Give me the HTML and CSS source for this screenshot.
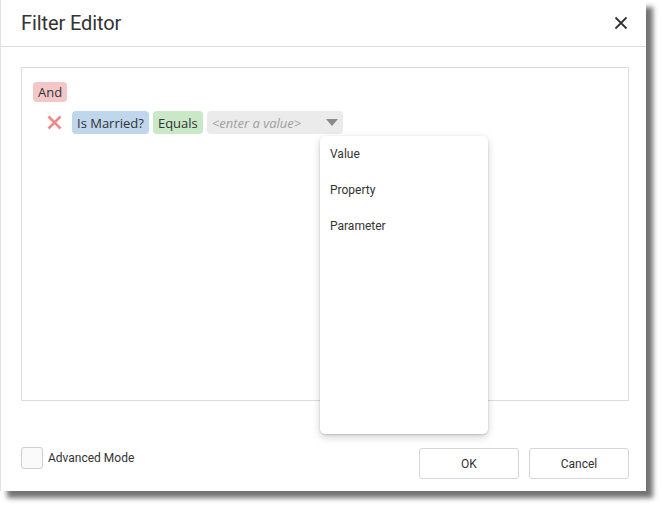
FILE: index.html
```html
<!DOCTYPE html>
<html>
<head>
<meta charset="utf-8">
<link rel="stylesheet" href="styles.css">
</head>
<body>
<div class="dialog">
  <div class="header">
    <span class="title">Filter Editor</span>
    <span class="close">
      <svg width="14" height="14" viewBox="0 0 14 14"><path d="M1.5 1.5 L12.5 12.5 M12.5 1.5 L1.5 12.5" stroke="#333" stroke-width="1.8" fill="none"/></svg>
    </span>
  </div>
  <div class="body">
    <div class="filter">
      <div class="row"><span class="chip and">And</span></div>
      <div class="row cond">
        <span class="remove">
          <svg width="15" height="15" viewBox="0 0 15 15"><path d="M1.5 1.5 L13.5 13.5 M13.5 1.5 L1.5 13.5" stroke="#ea8a8a" stroke-width="2.6" fill="none"/></svg>
        </span>
        <span class="chip field">Is Married?</span>
        <span class="chip op">Equals</span>
        <span class="chip value"><span class="ph">&lt;enter a value&gt;</span><span class="caret"></span></span>
      </div>
    </div>
  </div>
  <div class="footer">
    <label class="adv"><span class="box"></span><span>Advanced Mode</span></label>
    <div class="buttons">
      <button class="btn">OK</button>
      <button class="btn">Cancel</button>
    </div>
  </div>
  <div class="popup">
    <div class="item">Value</div>
    <div class="item">Property</div>
    <div class="item">Parameter</div>
  </div>
</div>
</body>
</html>
```

FILE: styles.css
```css
html, body { margin: 0; padding: 0; background: #fff; }
body { font-family: Roboto, "Liberation Sans", Arial, sans-serif; color: #333; padding-bottom: 16px; }

.dialog {
  position: relative;
  width: 645px;
  height: 491px;
  background: #fff;
  border-left: 1px solid #e2e2e2;
  box-shadow: 7px 7px 5px rgba(0,0,0,0.55);
  display: flex;
  flex-direction: column;
}

.header {
  height: 47px;
  border-bottom: 1px solid #dcdcdc;
  display: flex;
  align-items: center;
  justify-content: space-between;
  padding: 0 18px 0 20px;
  box-sizing: border-box;
}
.title { font-size: 20px; color: #333; letter-spacing: -0.1px; }
.close { display: flex; }

.body { padding: 20px 17px 0 20px; }
.filter {
  height: 334px;
  box-sizing: border-box;
  border: 1px solid #dcdcdc;
  padding: 14px 11px;
  font-family: "Open Sans", "Noto Sans", sans-serif;
  font-size: 13px;
}
.row { display: flex; align-items: center; }
.cond { margin-top: 9px; padding-left: 14px; gap: 4px; }
.remove { display: flex; width: 15px; margin-right: 6px; }
.chip {
  display: inline-flex;
  align-items: center;
  height: 22px;
  padding: 0 5px;
  border-radius: 4px;
  color: #333;
  line-height: 22px;
}
.cond .chip { height: 23px; }
.and { background: #f3c7c7; height: 20px; }
.field { background: #bfd6ed; }
.op { background: #c8e8c8; }
.value {
  background: #ebebeb;
  width: 136px;
  box-sizing: border-box;
  justify-content: space-between;
  padding-right: 5px;
}
.ph { color: #a0a0a0; font-style: italic; }
.caret {
  width: 0; height: 0;
  border-left: 6px solid transparent;
  border-right: 6px solid transparent;
  border-top: 7px solid #8a8a8a;
}

.footer {
  margin-top: auto;
  padding: 0 17px 12px 20px;
  display: flex;
  justify-content: space-between;
  align-items: flex-end;
}
.adv {
  display: flex;
  align-items: center;
  gap: 5px;
  font-size: 12px;
  color: #333;
  margin-bottom: 10px;
}
.box {
  width: 20px; height: 20px;
  border: 1px solid #cfcfcf;
  border-radius: 3px;
  background: #fafafa;
}
.buttons { display: flex; gap: 10px; }
.btn {
  width: 100px;
  height: 31px;
  border: 1px solid #d6d6d6;
  border-radius: 3px;
  background: #fff;
  font-family: Roboto, "Liberation Sans", sans-serif;
  font-size: 12px;
  color: #333;
  padding: 0;
}

.popup {
  position: absolute;
  left: 319px;
  top: 136px;
  width: 168px;
  height: 298px;
  background: #fff;
  border-radius: 5px;
  box-shadow: 0 1px 2px rgba(0,0,0,0.15), 0 3px 8px rgba(0,0,0,0.18);
  padding-top: 8px;
  box-sizing: border-box;
}
.item {
  height: 36px;
  line-height: 20px;
  padding: 0 10px;
  font-size: 12px;
  color: #333;
}
```
